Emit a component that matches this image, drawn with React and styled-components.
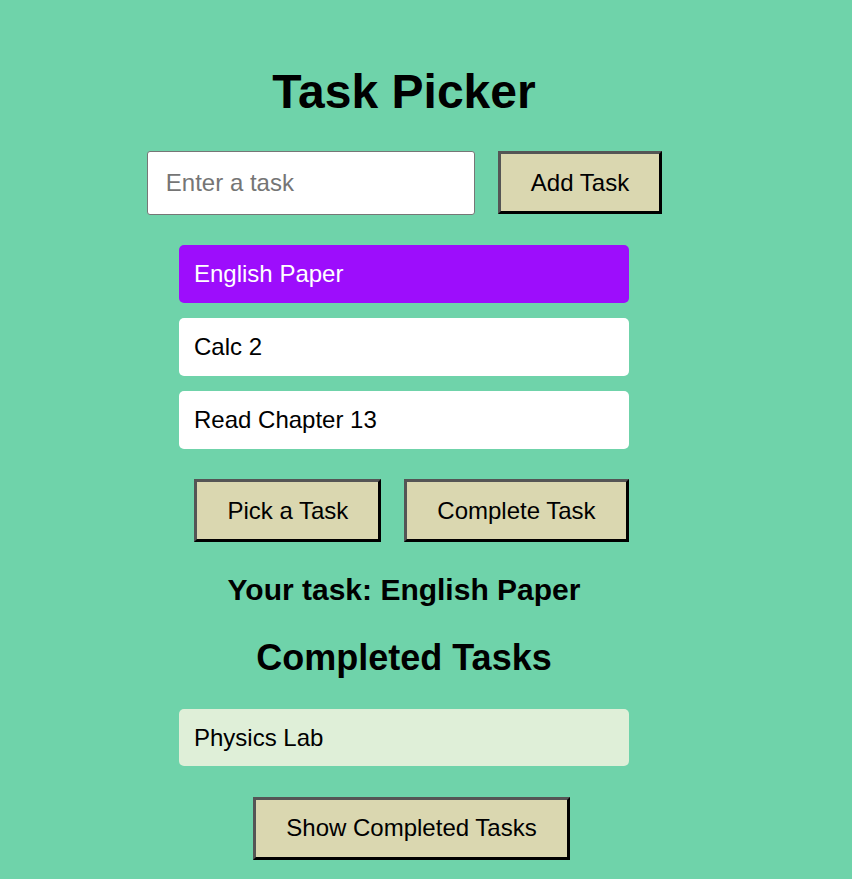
import { useState } from 'react';
import styled, { createGlobalStyle } from 'styled-components';

const GlobalStyle = createGlobalStyle`
    html, body {
        margin: 0;
        padding: 0;
        background: #6fd3aa;
        font-family: "Liberation Sans", Arial, sans-serif;
        color: #000;
    }
`;

const Page = styled.main`
    width: 808px;
    min-height: 879px;
    padding-top: 64px;
    display: flex;
    flex-direction: column;
    align-items: center;
    box-sizing: border-box;
`;

const Title = styled.h1`
    margin: 0 0 32px;
    font-size: 48px;
    line-height: 55px;
    font-weight: 700;
`;

const InputRow = styled.div`
    display: flex;
    align-items: flex-start;
    gap: 23px;
    padding-left: 1px;
    margin-bottom: 30px;
`;

const TaskInput = styled.input`
    width: 328px;
    height: 64px;
    box-sizing: border-box;
    padding: 0 18px;
    border: 1px solid #767676;
    border-radius: 3px;
    background: #fff;
    font-family: inherit;
    font-size: 24px;
    color: #000;
    outline: none;

    &::placeholder {
        color: #757575;
    }
`;

const Button = styled.button`
    height: 63px;
    box-sizing: border-box;
    padding: 0 30px;
    border: 3px solid;
    border-color: #555 #000 #000 #555;
    background: #dad7b0;
    font-family: inherit;
    font-size: 24px;
    color: #000;
    cursor: pointer;
    white-space: nowrap;
`;

const TaskList = styled.ul`
    list-style: none;
    margin: 0;
    padding: 0;
    width: 450px;
    display: flex;
    flex-direction: column;
    gap: 15.5px;
`;

const TaskItem = styled.li`
    padding: 15px;
    line-height: 27.5px;
    font-size: 24px;
    border-radius: 5px;
    background: ${({ $selected, $done }) => ($selected ? '#9d0dfc' : $done ? '#dfefd8' : '#ffffff')};
    color: ${({ $selected }) => ($selected ? '#fff' : '#000')};
    cursor: pointer;
`;

const ButtonRow = styled.div`
    display: flex;
    gap: 23px;
    padding-left: 15px;
    margin-top: 30.5px;
`;

const Picked = styled.h2`
    margin: 31px 0 29px;
    font-size: 30px;
    line-height: 34.5px;
    font-weight: 700;
`;

const SectionTitle = styled.h2`
    margin: 0 0 31px;
    font-size: 36px;
    line-height: 41px;
    font-weight: 700;
`;

const initialTasks = ['English Paper', 'Calc 2', 'Read Chapter 13'];

export default function App() {
    const [tasks] = useState(initialTasks);
    const [picked] = useState('English Paper');
    const [completed] = useState(['Physics Lab']);
    const [text, setText] = useState('');

    return (
        <>
            <GlobalStyle />
            <Page>
                <Title>Task Picker</Title>
                <InputRow>
                    <TaskInput
                        placeholder='Enter a task'
                        value={text}
                        onChange={(e) => setText(e.target.value)}
                    />
                    <Button>Add Task</Button>
                </InputRow>
                <TaskList>
                    {tasks.map((task) => (
                        <TaskItem key={task} $selected={task === picked}>{task}</TaskItem>
                    ))}
                </TaskList>
                <ButtonRow>
                    <Button>Pick a Task</Button>
                    <Button>Complete Task</Button>
                </ButtonRow>
                <Picked>Your task: {picked}</Picked>
                <SectionTitle>Completed Tasks</SectionTitle>
                <TaskList>
                    {completed.map((task) => (
                        <TaskItem key={task} $done>{task}</TaskItem>
                    ))}
                </TaskList>
                <ButtonRow>
                    <Button>Show Completed Tasks</Button>
                </ButtonRow>
            </Page>
        </>
    );
}
